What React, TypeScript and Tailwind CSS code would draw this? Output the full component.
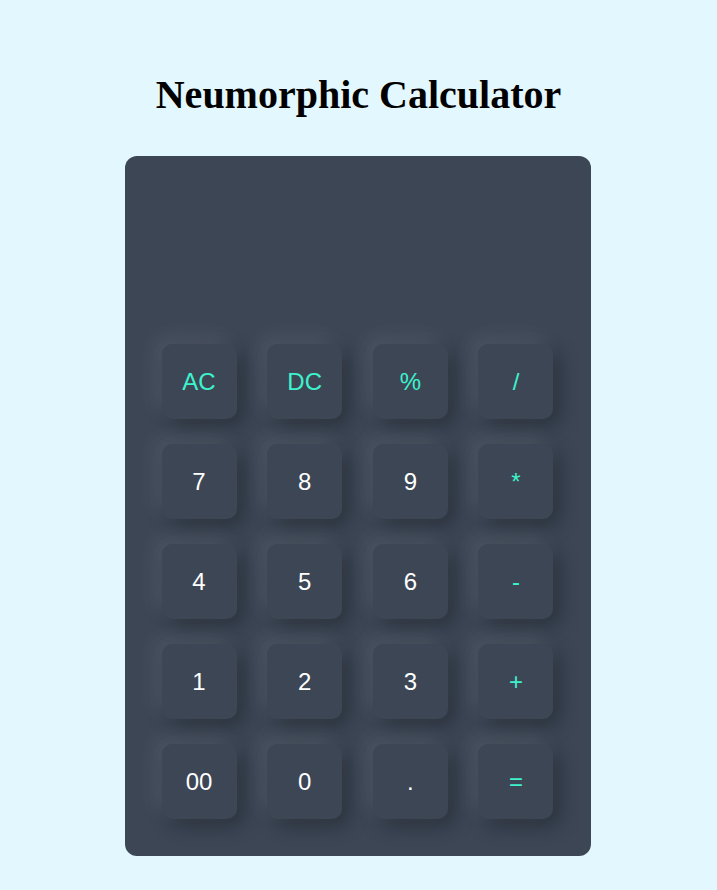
import React from "react";

const rows: string[][] = [
  ["AC", "DC", "%", "/"],
  ["7", "8", "9", "*"],
  ["4", "5", "6", "-"],
  ["1", "2", "3", "+"],
  ["00", "0", ".", "="],
];

const ops = ["AC", "DC", "%", "/", "*", "-", "+", "="];

export default function App() {
  return (
    <div className="min-h-screen w-full bg-[#e3f7ff] flex flex-col items-center">
      <h1 className="mt-[71px] mb-[37px] text-[40px] leading-[48px] font-bold text-black font-['Liberation_Serif',serif]">
        Neumorphic Calculator
      </h1>
      <div className="w-[466px] h-[700px] -translate-x-px rounded-[12px] bg-[#3c4655] flex flex-col px-[37px] pb-[37px]">
        <div className="h-[188px]" />
        <div className="flex flex-col gap-[25px]">
          {rows.map((row, i) => (
            <div key={i} className="flex justify-between">
              {row.map((k) => (
                <button
                  key={k}
                  className={`w-[75px] h-[75px] rounded-[10px] bg-[#3c4655] flex items-center justify-center text-[24px] font-['Liberation_Sans',sans-serif] shadow-[-7px_-7px_20px_rgba(255,255,255,0.09),7px_7px_20px_rgba(0,0,0,0.3)] ${
                    ops.includes(k) ? "text-[#3ef2cc]" : "text-white"
                  }`}
                >
                  {k}
                </button>
              ))}
            </div>
          ))}
        </div>
      </div>
    </div>
  );
}
